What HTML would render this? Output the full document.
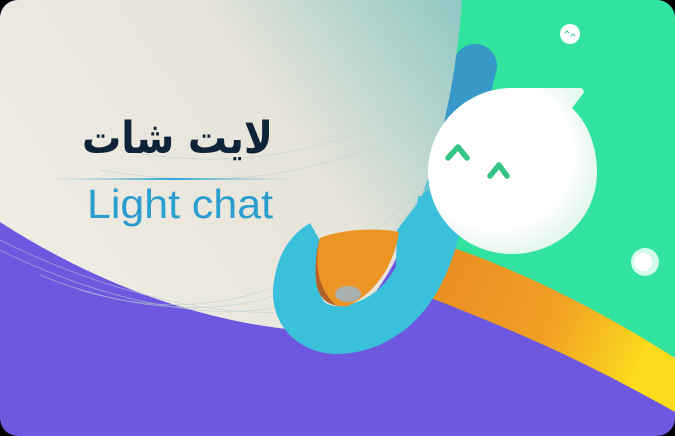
<!DOCTYPE html>
<html><head><meta charset="utf-8"><style>
html,body{margin:0;padding:0;background:#000;}
svg{display:block}
</style></head><body>
<svg width="675" height="436" viewBox="0 0 675 436" xmlns="http://www.w3.org/2000/svg">
<defs>
<clipPath id="c"><rect x="0" y="0" width="675" height="436" rx="18"/></clipPath>
<linearGradient id="cream" x1="0" y1="0.5" x2="1" y2="0">
<stop offset="0" stop-color="#efece4"/><stop offset="0.55" stop-color="#e6e3d8"/><stop offset="1" stop-color="#8ec8c4"/>
</linearGradient>
<linearGradient id="org" x1="0" y1="0" x2="1" y2="0.3">
<stop offset="0" stop-color="#e88a22"/><stop offset="0.6" stop-color="#f1a024"/><stop offset="1" stop-color="#fcdc1c"/>
</linearGradient>
<linearGradient id="blu" x1="0" y1="0" x2="0" y2="1">
<stop offset="0" stop-color="#3699c8"/><stop offset="0.4" stop-color="#3699c8"/><stop offset="0.8" stop-color="#3bbfdc"/>
</linearGradient>
<linearGradient id="ln" x1="0" x2="1">
<stop offset="0" stop-color="#9cc6d6" stop-opacity="0"/><stop offset="0.5" stop-color="#2fa6d8"/><stop offset="1" stop-color="#9cc6d6" stop-opacity="0"/>
</linearGradient>
<radialGradient id="bub" cx="0.4" cy="0.4" r="0.6"><stop offset="0.75" stop-color="#fff"/><stop offset="1" stop-color="#e6f7ef"/></radialGradient>
</defs>
<g clip-path="url(#c)">
<rect width="675" height="436" fill="#6e58df"/>
<path d="M455 0 H675 V362 C600 320 520 270 440 250 Z" fill="#31e39e"/>
<path d="M475 66 C460 120 452 170 440 215" fill="none" stroke="url(#blu)" stroke-width="44" stroke-linecap="round"/>
<path d="M0 0 H462 C458 60 445 140 420 200 C400 260 370 320 320 332 C200 325 90 280 0 222 Z" fill="url(#cream)"/>
<g fill="none" stroke="#b9cfd0" stroke-width="0.7" opacity="0.7">
<path d="M0 240 C120 300 240 320 300 310 C360 290 430 200 460 120"/>
<path d="M0 250 C120 310 240 325 300 300 C360 280 420 200 455 150"/>
<path d="M40 275 C150 320 250 315 310 280 C360 250 410 190 450 180"/>
<path d="M80 290 C180 320 260 300 320 265"/>
<path d="M120 150 C220 170 330 160 450 90"/>
<path d="M100 170 C220 190 330 180 445 110"/>
</g>
<path d="M445 245 C520 270 600 310 675 358 V412 C600 370 540 340 423 295 Z" fill="url(#org)"/>
<path d="M420 200 L462 200 L455 245 L425 296 L395 300 L397 230 Z" fill="#3bc0dc"/>
<path d="M442 200 C436 235 428 260 415 282 C395 315 365 330 335 330 C305 328 293 305 298 283 C301 265 308 252 322 244" fill="none" stroke="#3bc0dc" stroke-width="48" stroke-linecap="butt"/>
<path d="M320 238 C345 228 380 228 399 232 C394 264 377 292 348 306 C332 308 318 300 316 282 C315 266 316 250 320 238 Z" fill="#ec9424"/>
<path d="M320 238 C315 258 315 287 336 305 C325 304 317 294 316 280 C315 266 316 250 320 238 Z" fill="#b0602a"/>
<ellipse cx="348" cy="294" rx="13" ry="8" fill="#a9b0ad"/>
<path d="M512 88 H580 C584 88 585 92 582 95 L572 108 C590 125 597 150 597 172 C597 218 559 254 512 254 C466 254 428 218 428 172 C428 126 466 88 512 88 Z" fill="url(#bub)"/>
<g fill="none" stroke="#34c585" stroke-width="5.5" stroke-linecap="round" stroke-linejoin="round">
<path d="M448 158 L458 147 L467 158"/>
<path d="M490 176 L499 165 L507 176"/>
</g>
<circle cx="570" cy="34" r="10" fill="#fff"/>
<path d="M565 33 l2-2 l2 2 M571 36 l2-2 l2 2" stroke="#34c585" stroke-width="1" fill="none"/>
<circle cx="645" cy="262" r="14" fill="#f0fff8" opacity="0.85"/>
<circle cx="643" cy="262" r="9" fill="#fff"/>
<text x="82" y="153" textLength="191" lengthAdjust="spacingAndGlyphs" font-family="DejaVu Sans, sans-serif" font-weight="bold" font-size="44" fill="#0e2238">لايت شات</text>
<rect x="45" y="178" width="255" height="2" fill="url(#ln)"/>
<text x="87" y="218" textLength="186" lengthAdjust="spacingAndGlyphs" font-family="Liberation Sans, sans-serif" font-size="41" fill="#2b9dce">Light chat</text>
</g>
</svg>
</body></html>
